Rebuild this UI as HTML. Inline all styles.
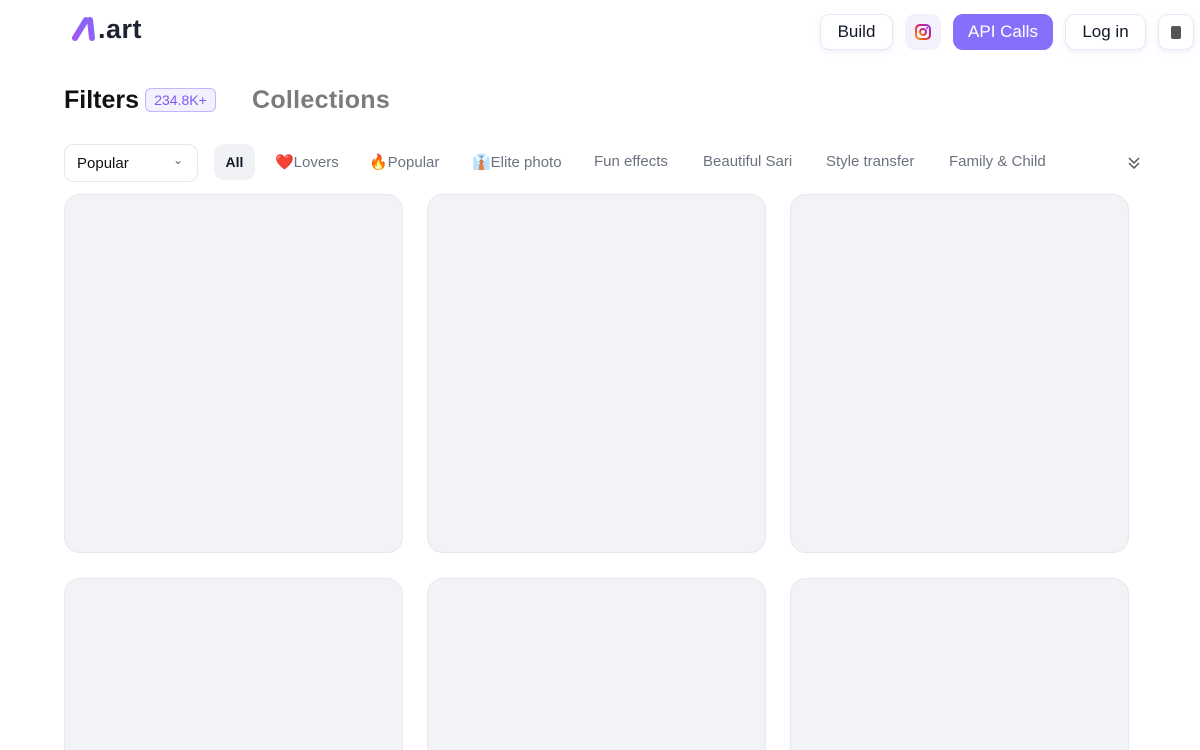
<!DOCTYPE html>
<html style="overflow:hidden;height:750px"><head><meta charset="utf-8"><style>
*{box-sizing:border-box;margin:0;padding:0}
body{width:1200px;height:750px;overflow:hidden;background:#fff;font-family:"Liberation Sans",sans-serif;color:#111827;position:relative}
.a{position:absolute}
.btn{position:absolute;top:14px;height:36px;border-radius:10px;display:flex;align-items:center;justify-content:center;font-size:17px;border:1px solid #eee4f8;box-shadow:0 2px 6px rgba(150,100,220,.12);background:#fff}
.tab{position:absolute;top:153px;font-size:15px;color:#6b7280;white-space:nowrap}
.card{position:absolute;width:339px;height:359px;background:#f2f3f6;border:1px solid #e7e8ec;border-radius:16px}
.c2{height:172px;border-bottom:none;border-radius:16px 16px 0 0}
</style></head><body>
<svg class="a" style="left:72px;top:16px" width="26" height="26" viewBox="0 0 26 26"><defs><linearGradient id="g" x1="0" y1="1" x2="1" y2="0"><stop offset="0" stop-color="#a855f7"/><stop offset="1" stop-color="#7c6cf5"/></linearGradient></defs><path d="M3 22 L14 4" stroke="url(#g)" stroke-width="6" stroke-linecap="round"/><path d="M18 4 L20 22" stroke="url(#g)" stroke-width="6" stroke-linecap="round"/></svg>
<div class="a" style="left:98px;top:14px;font-size:27px;font-weight:bold;color:#1f2230;letter-spacing:0.5px">.art</div>
<div class="btn" style="left:820px;width:73px">Build</div>
<div class="btn" style="left:905px;width:36px;background:#f4f1fd;border-color:#f4f1fd;box-shadow:none"><svg width="18" height="18" viewBox="0 0 18 18"><defs><linearGradient id="ig" x1="0" y1="1" x2="1" y2="0"><stop offset="0" stop-color="#f59e0b"/><stop offset=".5" stop-color="#e11d48"/><stop offset="1" stop-color="#9333ea"/></linearGradient></defs><rect x="2" y="2" width="14" height="14" rx="4" fill="none" stroke="url(#ig)" stroke-width="2"/><circle cx="9" cy="9" r="3" fill="none" stroke="url(#ig)" stroke-width="2"/><circle cx="13" cy="5" r="1" fill="#c026d3"/></svg></div>
<div class="btn" style="left:953px;width:100px;background:#8670fb;border-color:#8670fb;color:#fff;box-shadow:none">API Calls</div>
<div class="btn" style="left:1065px;width:81px">Log in</div>
<div class="btn" style="left:1158px;width:36px"><div style="width:10px;height:13px;background:#555;border-radius:2px"></div></div>
<div class="a" style="left:64px;top:86px;font-size:25px;font-weight:bold;color:#111">Filters</div>
<div class="a" style="left:145px;top:88px;width:71px;height:24px;border:1px solid #c4b5fd;background:#f3f0ff;border-radius:6px;color:#7c5cf0;font-size:14px;display:flex;align-items:center;justify-content:center">234.8K+</div>
<div class="a" style="left:252px;top:86px;font-size:25px;font-weight:bold;color:#7b7b7b;letter-spacing:0.3px">Collections</div>
<div class="a" style="left:64px;top:144px;width:134px;height:38px;border:1px solid #e5e7eb;border-radius:10px;font-size:15px;padding:10px 12px;color:#111">Popular<span style="position:absolute;right:14px;top:8px;font-size:12px;color:#666">⌄</span></div>
<div class="a" style="left:214px;top:144px;width:41px;height:36px;background:#f1f2f6;border-radius:10px;font-size:14px;font-weight:bold;display:flex;align-items:center;justify-content:center">All</div>
<div class="tab" style="left:275px">❤️Lovers</div>
<div class="tab" style="left:369px">🔥Popular</div>
<div class="tab" style="left:472px">👔Elite photo</div>
<div class="tab" style="left:594px">Fun effects</div>
<div class="tab" style="left:703px">Beautiful Sari</div>
<div class="tab" style="left:826px">Style transfer</div>
<div class="tab" style="left:949px">Family &amp; Child</div>
<svg class="a" style="left:1127px;top:155px" width="14" height="14" viewBox="0 0 14 14" fill="none" stroke="#555" stroke-width="1.5"><path d="M2 3l5 5 5-5M2 8l5 5 5-5"/></svg>
<div class="card" style="left:64px;top:194px"></div>
<div class="card" style="left:427px;top:194px"></div>
<div class="card" style="left:790px;top:194px"></div>
<div class="card c2" style="left:64px;top:578px"></div>
<div class="card c2" style="left:427px;top:578px"></div>
<div class="card c2" style="left:790px;top:578px"></div>
</body></html>
